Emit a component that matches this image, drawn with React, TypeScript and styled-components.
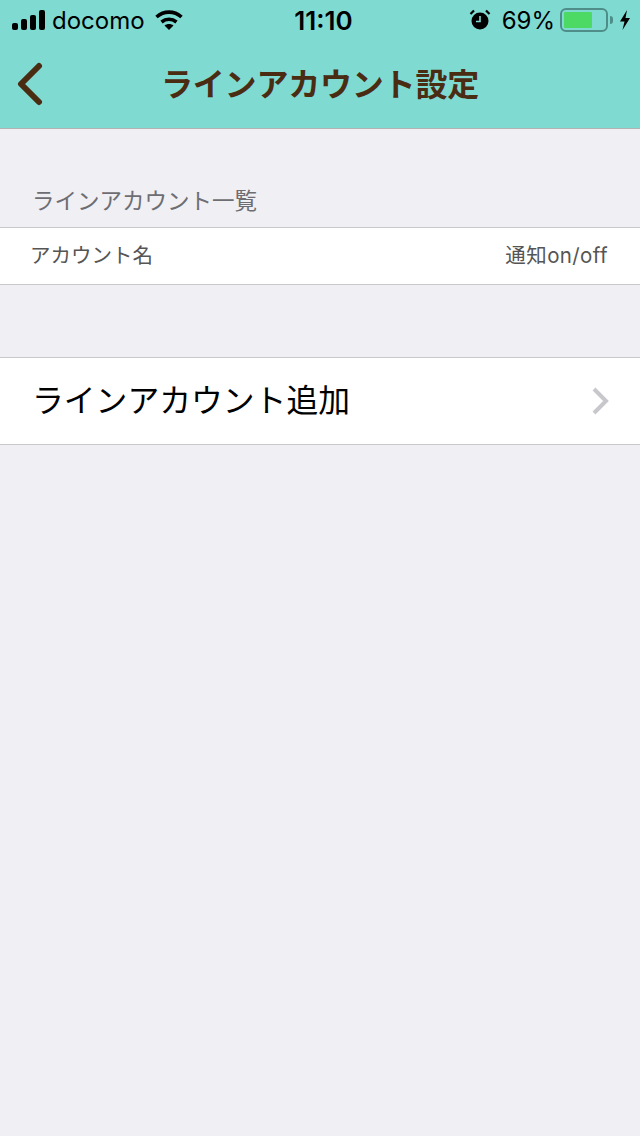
import React from 'react';
import styled, { createGlobalStyle } from 'styled-components';

const GlobalStyle = createGlobalStyle`
  html, body {
    margin: 0;
    padding: 0;
    background: #efeff4;
    font-family: Inter, "Noto Sans CJK JP", sans-serif;
  }
`;

const Page = styled.div`
  width: 640px;
  height: 1136px;
  background: #efeff4;
  overflow: hidden;
`;

const Header = styled.header`
  height: 128px;
  background: #7fdad2;
  border-bottom: 1px solid #b2b2b2;
`;

const StatusBar = styled.div`
  height: 40px;
  display: grid;
  grid-template-columns: 1fr auto 1fr;
  align-items: center;
  color: #000;
  font-size: 24px;
`;

const StatusLeft = styled.div`
  display: flex;
  align-items: center;
  padding-left: 12px;
`;

const Carrier = styled.span`
  margin-left: 6px;
`;

const Wifi = styled.svg`
  margin-left: 10px;
  margin-top: -1px;
`;

const Clock = styled.span`
  font-weight: 600;
  font-size: 26px;
  margin-left: 7px;
`;

const StatusRight = styled.div`
  display: flex;
  align-items: center;
  justify-content: flex-end;
  padding-right: 9px;
`;

const Percent = styled.span`
  margin-left: 11px;
  margin-right: 5px;
`;

const Battery = styled.div`
  width: 48px;
  height: 24px;
  box-sizing: border-box;
  border: 2px solid #4f8d88;
  border-radius: 6px;
  padding: 2px;
`;

const BatteryLevel = styled.div`
  height: 100%;
  background: #4cd964;
  border-radius: 1px;
`;

const BatteryCap = styled.div`
  width: 3px;
  height: 8px;
  margin-left: 2px;
  background: #4f8d88;
  border-radius: 0 3px 3px 0;
`;

const Bolt = styled.svg`
  margin-left: 6px;
`;

const NavBar = styled.div`
  height: 88px;
  display: flex;
  align-items: center;
  justify-content: center;
  position: relative;
`;

const BackButton = styled.svg`
  position: absolute;
  left: 16px;
  top: 22px;
`;

const Title = styled.h1`
  margin: -4px 0 0;
  font-size: 32px;
  font-weight: 700;
  letter-spacing: -0.2px;
  color: #4a2c12;
`;

const SectionLabel = styled.div`
  height: 98px;
  box-sizing: border-box;
  padding: 58px 0 0 32px;
  font-size: 22.5px;
  line-height: 28px;
  color: #6d6d72;
`;

const Row = styled.div<{ $height: number }>`
  height: ${(p) => p.$height}px;
  box-sizing: border-box;
  display: flex;
  align-items: center;
  justify-content: space-between;
  background: #fff;
  border-top: 1px solid #c8c7cc;
  border-bottom: 1px solid #c8c7cc;
`;

const ColumnLabel = styled.span<{ $side: 'left' | 'right' }>`
  font-size: 20.5px;
  line-height: 24px;
  margin-top: 0;
  color: #555;
  letter-spacing: ${(p) => (p.$side === 'right' ? '0.4px' : '0')};
  padding: ${(p) => (p.$side === 'left' ? '0 0 0 30px' : '0 32px 0 0')};
`;

const Spacer = styled.div`
  height: 72px;
`;

const AddLabel = styled.span`
  padding-left: 32px;
  margin-top: -6px;
  font-size: 31.8px;
  color: #000;
`;

const Chevron = styled.svg`
  margin-right: 30px;
`;

export default function App() {
  return (
    <Page>
      <GlobalStyle />
      <Header>
        <StatusBar>
          <StatusLeft>
            <svg width="34" height="20" viewBox="0 0 34 20">
              <rect x="0" y="13" width="6" height="7" rx="2" fill="#000" />
              <rect x="9" y="9" width="6" height="11" rx="2" fill="#000" />
              <rect x="18" y="5" width="6" height="15" rx="2" fill="#000" />
              <rect x="27" y="0" width="6" height="20" rx="2" fill="#000" />
            </svg>
            <Carrier>docomo</Carrier>
            <Wifi width="28" height="20" viewBox="0 0 28 20">
              <path d="M1.5 7C9 0.5 19 0.5 26.5 7" fill="none" stroke="#000" strokeWidth="3.6" />
              <path d="M6.5 12C11 8.5 17 8.5 21.5 12" fill="none" stroke="#000" strokeWidth="3.6" />
              <path d="M9.5 15.5C12 13.5 16 13.5 18.5 15.5L14 20Z" fill="#000" />
            </Wifi>
          </StatusLeft>
          <Clock>11:10</Clock>
          <StatusRight>
            <svg width="22" height="22" viewBox="0 0 22 22">
              <circle cx="11" cy="12" r="8.5" fill="#000" />
              <path d="M11 7v5.5H7" fill="none" stroke="#7fdad2" strokeWidth="1.6" />
              <path d="M1.5 5L5 1.5M20.5 5L17 1.5" stroke="#000" strokeWidth="2.2" />
            </svg>
            <Percent>69%</Percent>
            <Battery>
              <BatteryLevel style={{ width: '69%' }} />
            </Battery>
            <BatteryCap />
            <Bolt width="12" height="20" viewBox="0 0 12 20">
              <path d="M8 0L1 11.5H5.5L3.5 20L11 8H6.5Z" fill="#000" />
            </Bolt>
          </StatusRight>
        </StatusBar>
        <NavBar>
          <BackButton width="28" height="44" viewBox="0 0 28 44">
            <path d="M23 4L5 22L23 40" fill="none" stroke="#4a2c12" strokeWidth="6" strokeLinecap="round" strokeLinejoin="round" />
          </BackButton>
          <Title>ラインアカウント設定</Title>
        </NavBar>
      </Header>
      <SectionLabel>ラインアカウント一覧</SectionLabel>
      <Row $height={58}>
        <ColumnLabel $side="left">アカウント名</ColumnLabel>
        <ColumnLabel $side="right">通知on/off</ColumnLabel>
      </Row>
      <Spacer />
      <Row $height={88}>
        <AddLabel>ラインアカウント追加</AddLabel>
        <Chevron width="20" height="30" viewBox="0 0 20 30">
          <path d="M4 3L16 15L4 27" fill="none" stroke="#c7c7cc" strokeWidth="4" />
        </Chevron>
      </Row>
    </Page>
  );
}
